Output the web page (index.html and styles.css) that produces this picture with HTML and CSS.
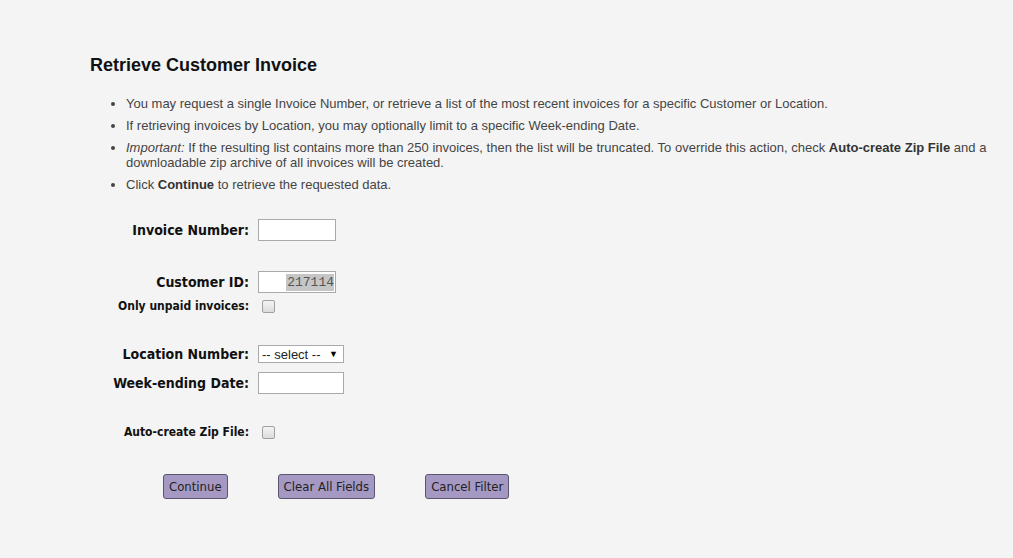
FILE: index.html
```html
<html>
  <head>
    <title>Retrieve Customer Invoice</title>
    <link rel="stylesheet" href="styles.css">
  </head>
  <body>
    <div class="page">
      <h1 class="title">Retrieve Customer Invoice</h1>
      <ul class="notes">
        <li>You may request a single Invoice Number, or retrieve a list of the most recent invoices for a specific Customer or Location.</li>
        <li>If retrieving invoices by Location, you may optionally limit to a specific Week-ending Date.</li>
        <li><i>Important:</i> If the resulting list contains more than 250 invoices, then the list will be truncated. To override this action, check <b>Auto-create Zip File</b> and a downloadable zip archive of all invoices will be created.</li>
        <li>Click <b>Continue</b> to retrieve the requested data.</li>
      </ul>

      <form class="filter">
        <div class="row row-invoice">
          <label for="invoice">Invoice Number:</label>
          <input type="text" id="invoice" class="box">
        </div>
        <div class="row row-customer">
          <label for="customer">Customer ID:</label>
          <div class="box readonly" id="customer"><span class="sel">217114</span></div>
        </div>
        <div class="row row-check">
          <label for="unpaid" class="small">Only unpaid invoices:</label>
          <input type="checkbox" id="unpaid" class="check">
        </div>
        <div class="row row-location">
          <label for="location">Location Number:</label>
          <div class="pick" id="location"><span>-- select --</span><span class="arrow">&#9660;</span></div>
        </div>
        <div class="row row-week">
          <label for="week">Week-ending Date:</label>
          <input type="text" id="week" class="box wide">
        </div>
        <div class="row row-zip">
          <label for="zip" class="small">Auto-create Zip File:</label>
          <input type="checkbox" id="zip" class="check">
        </div>
        <div class="buttons">
          <button type="button" class="btn">Continue</button>
          <button type="button" class="btn">Clear All Fields</button>
          <button type="button" class="btn">Cancel Filter</button>
        </div>
      </form>
    </div>
  </body>
</html>
```

FILE: styles.css
```css
body {
  margin: 0;
  background-color: #f4f4f4;
  font-family: "Liberation Sans", Arial, Helvetica, sans-serif;
}

.page {
  padding: 54px 10px 0 90px;
}

/* heading */
.title {
  margin: 0;
  font-size: 18px;
  line-height: 22px;
  color: #111;
}

/* help bullets */
.notes {
  margin: 20px 0 0 0;
  padding-left: 36px;
  font-size: 13px;
  line-height: 15px;
  color: #444;
}

.notes li {
  margin-bottom: 7px;
}

.notes b {
  color: #333;
}

/* form rows */
.filter {
  margin: 0;
  padding-left: 10px;
}

.row {
  display: flex;
  align-items: center;
}

.row label {
  width: 149px;
  margin-right: 9px;
  text-align: right;
  font-family: "DejaVu Sans Condensed", "DejaVu Sans", sans-serif;
  font-weight: bold;
  font-size: 14px;
  color: #111;
}

.row label.small {
  font-size: 12px;
}

.row-invoice { margin-top: 27px; height: 22px; }
.row-customer { margin-top: 30px; height: 22px; }
.row-check { margin-top: 3px; height: 20px; }
.row-location { margin-top: 29px; height: 18px; }
.row-week { margin-top: 9px; height: 22px; }
.row-zip { margin-top: 28px; height: 20px; }

.box {
  box-sizing: border-box;
  width: 78px;
  height: 22px;
  margin: 0;
  padding: 0 2px;
  border: 1px solid #a9a9a9;
  background-color: #fff;
}

.box.wide {
  width: 86px;
}

.readonly {
  display: flex;
  align-items: center;
  justify-content: flex-end;
  padding: 0 1px;
}

.readonly .sel {
  background-color: #c6c6c6;
  color: #555;
  font-family: "Liberation Mono", "Courier New", monospace;
  font-size: 13px;
  line-height: 17px;
  padding-left: 1px;
}

.pick {
  box-sizing: border-box;
  display: flex;
  align-items: center;
  justify-content: space-between;
  width: 86px;
  height: 18px;
  padding: 0 5px 0 3px;
  border: 1px solid #a9a9a9;
  background-color: #fff;
  font-size: 13px;
  color: #222;
}

.pick .arrow {
  font-size: 9px;
  color: #000;
}

.check {
  -webkit-appearance: none;
  appearance: none;
  width: 13px;
  height: 13px;
  margin: 0 0 0 4px;
  border: 1px solid #a0a0a0;
  border-radius: 2px;
  background: linear-gradient(#f4f4f4, #dcdcdc);
}

/* buttons */
.buttons {
  display: flex;
  margin-top: 32px;
  padding-left: 63px;
}

.btn {
  height: 25px;
  margin-right: 50px;
  padding: 0 5px;
  border: 1px solid #5b5670;
  border-radius: 3px;
  background-color: #a599c3;
  color: #222;
  font-family: "DejaVu Sans Condensed", "DejaVu Sans", sans-serif;
  font-size: 13px;
}
```
